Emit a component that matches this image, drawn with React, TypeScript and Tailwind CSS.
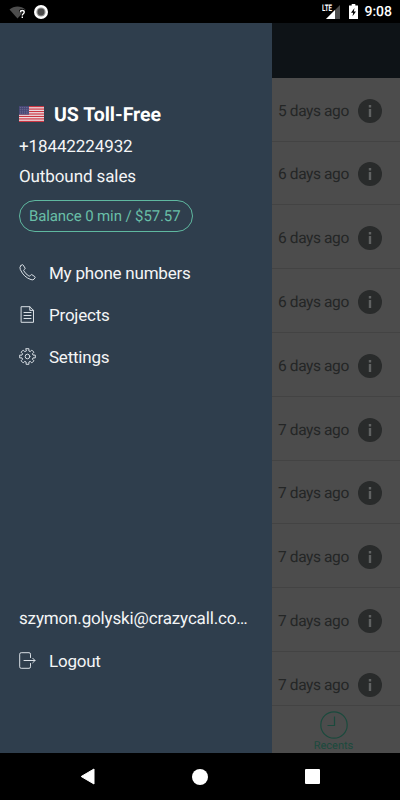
import type { ReactNode } from 'react';

const calls = [
  '5 days ago',
  '6 days ago',
  '6 days ago',
  '6 days ago',
  '6 days ago',
  '7 days ago',
  '7 days ago',
  '7 days ago',
  '7 days ago',
  '7 days ago',
];

const StatusBar = () => (
  <header className="flex h-[23px] shrink-0 items-center justify-between bg-black pl-[9px] pr-[8px] text-white">
    <div className="flex items-center gap-[8px]">
      <svg width="17" height="16" viewBox="0 0 17 16">
        <path d="M0.5 5.5C5 1.5 12 1.5 16.5 5.5L8.5 14.5Z" fill="#4d4d4d" />
        <path
          d="M11.4 8.2C11.4 6 15.2 6 15.2 8.2C15.2 9.7 13.3 9.7 13.3 11.4M13.3 12.5V14"
          fill="none"
          stroke="#000"
          strokeWidth="3"
        />
        <path
          d="M11.4 8.2C11.4 6 15.2 6 15.2 8.2C15.2 9.7 13.3 9.7 13.3 11.4M13.3 12.5V14"
          fill="none"
          stroke="#fff"
          strokeWidth="1.4"
        />
      </svg>
      <svg width="14" height="14" viewBox="0 0 14 14">
        <circle cx="7" cy="7" r="7" fill="#fff" />
        <circle cx="7" cy="7" r="4.6" fill="#999" />
        <circle cx="7" cy="7" r="3.4" fill="#4a4a4a" />
      </svg>
    </div>
    <div className="flex items-center">
      <svg width="19" height="16" viewBox="0 0 19 16">
        <path d="M18 1V15H4Z" fill="#4d4d4d" />
        <path d="M13 6V15H4Z" fill="#fff" />
        <path d="M0 0H10V8H0Z" fill="#000" />
        <text x="0" y="7.3" fill="#fff" fontSize="9" fontWeight="700" textLength="10" lengthAdjust="spacingAndGlyphs">
          LTE
        </text>
      </svg>
      <svg className="ml-[8px]" width="9" height="15" viewBox="0 0 9 15">
        <path d="M0 1.5H2.7V0H6.3V1.5H9V15H0Z" fill="#fff" />
        <path d="M5.5 4L2 8.7H4.2L3.5 12.3L7 7.5H4.8Z" fill="#000" />
      </svg>
      <span className="ml-[6px] pt-px text-[14px] font-medium leading-none">9:08</span>
    </div>
  </header>
);

const Flag = () => (
  <svg width="25" height="16" viewBox="0 0 25 16">
    <rect width="25" height="16" fill="#eee8ec" />
    {[0, 2, 4, 6, 8, 10, 12].map((n) => (
      <rect key={n} y={(n * 16) / 13} width="25" height={16 / 13} fill="#cb3542" />
    ))}
    <rect width="10" height="8.6" fill="#474775" />
    {[1.3, 3.2, 5.1, 7].map((y) =>
      [1.2, 3.2, 5.2, 7.2, 9].map((x) => <circle key={`${x}-${y}`} cx={x} cy={y} r="0.4" fill="#b6b4ca" />),
    )}
  </svg>
);

const Icon = ({ children }: { children: ReactNode }) => (
  <svg
    width="17"
    height="17"
    viewBox="0 0 17 17"
    fill="none"
    stroke="#d9dfe5"
    strokeLinejoin="round"
    strokeLinecap="round"
  >
    {children}
  </svg>
);

const PhoneIcon = () => (
  <Icon>
    <path d="M1.7 1.8L3 .8Q3.7.4 4.2 1.1L6 4Q6.4 4.7 5.7 5.2L4.9 5.8Q4.4 6.2 4.8 6.9Q6.7 10.2 9.9 12Q10.7 12.4 11.1 11.8L11.7 11Q12.2 10.3 12.9 10.7L15.8 12.6Q16.5 13.1 16 13.8L15 15.2Q14.2 16.3 12 15.6Q4.8 13.2 1.3 5.5Q.2 2.9 1.7 1.8Z" />
  </Icon>
);

const DocumentIcon = () => (
  <Icon>
    <path d="M2.5.7H10.8L14.5 4.4V16.3H2.5ZM10.8.7V4.4H14.5M5 6.5H12M5 9.5H12M5 12.5H12" />
  </Icon>
);

const GearIcon = () => (
  <Icon>
    <circle cx="8.5" cy="8.5" r="2.3" />
    <path d="M7.1 .7H9.9V3L11.2 3.6L12.8 2.1L14.9 4.2L13.4 5.8L14 7.1H16.3V9.9H14L13.4 11.2L14.9 12.8L12.8 14.9L11.2 13.4L9.9 14V16.3H7.1V14L5.8 13.4L4.2 14.9L2.1 12.8L3.6 11.2L3 9.9H.7V7.1H3L3.6 5.8L2.1 4.2L4.2 2.1L5.8 3.6L7.1 3Z" />
  </Icon>
);

const LogoutIcon = () => (
  <Icon>
    <path d="M11.5 5.5V2.2Q11.5.7 10 .7H2.2Q.7.7.7 2.2V14.8Q.7 16.3 2.2 16.3H10Q11.5 16.3 11.5 14.8V11.5M5 8.5H16M13.7 6.2L16 8.5L13.7 10.8" />
  </Icon>
);

const MenuItem = ({ icon, label }: { icon: ReactNode; label: string }) => (
  <button className="flex h-[42px] items-center gap-[13px] text-left tracking-[-0.22px]" type="button">
    {icon}
    <span className="pt-[3px]">{label}</span>
  </button>
);

const Drawer = () => (
  <aside className="flex w-[272px] shrink-0 flex-col bg-[#2f3e4d] pl-[19px] pr-[20px] text-[17px] text-[#f4f5f6]">
    <div className="mt-[76px] flex h-[30px] items-center gap-[10px]">
      <Flag />
      <h1 className="pt-px text-[19.5px] font-bold text-white">US Toll-Free</h1>
    </div>
    <p className="mt-[3px] leading-[30px] tracking-[-0.1px]">+18442224932</p>
    <p className="leading-[30px] tracking-[-0.1px]">Outbound sales</p>
    <div className="mt-[8px] flex h-[32px] w-[174px] items-center rounded-full border border-[#5fb8a0] pl-[9px] text-[15px] tracking-[-0.12px] text-[#69bea7]">
      Balance 0 min / $57.57
    </div>
    <nav className="mt-[19px] flex flex-col">
      <MenuItem icon={<PhoneIcon />} label="My phone numbers" />
      <MenuItem icon={<DocumentIcon />} label="Projects" />
      <MenuItem icon={<GearIcon />} label="Settings" />
    </nav>
    <div className="mb-[72px] mt-auto flex flex-col">
      <p className="h-[42px] pt-px leading-[42px] tracking-[-0.15px]">szymon.golyski@crazycall.co…</p>
      <MenuItem icon={<LogoutIcon />} label="Logout" />
    </div>
  </aside>
);

const InfoIcon = () => (
  <svg width="24" height="24" viewBox="0 0 24 24">
    <circle cx="12" cy="12" r="12" fill="#292b2b" />
    <path d="M10.8 6H13.2V8.4H10.8ZM10.8 10H13.2V18H10.8Z" fill="#606262" />
  </svg>
);

const Recents = () => (
  <main className="flex min-w-0 flex-1 flex-col bg-[#4c4c4c]">
    <div className="h-[54.8px] shrink-0 bg-[#0e1317]" />
    <ul className="min-h-0 flex-1 overflow-hidden">
      {calls.map((time, index) => (
        <li
          key={index}
          className="flex h-[63.8px] items-center justify-between border-b border-[#434343] pl-[6px] pr-[18px] pt-[3px] text-[15.5px] tracking-[-0.39px] text-[#242626]"
        >
          <span className="pt-px">{time}</span>
          <InfoIcon />
        </li>
      ))}
    </ul>
    <footer className="flex h-[48px] shrink-0 flex-col items-center border-t border-[#434343] pr-[5px] pt-[5px] text-[#1b4a3d]">
      <svg className="shrink-0" width="28" height="28" viewBox="0 0 28 28" fill="none" stroke="currentColor">
        <circle cx="14" cy="14" r="13.2" strokeWidth="1.2" />
        <path d="M14.5 5.5V14.5H7.5" strokeWidth="1.2" />
      </svg>
      <span className="text-[11px] leading-[13px]">Recents</span>
    </footer>
  </main>
);

const NavigationBar = () => (
  <footer className="flex h-[47px] shrink-0 items-center justify-between bg-black pl-[80px] pr-[80px]">
    <svg width="15" height="17" viewBox="0 0 15 17">
      <path d="M1.2 8.5L14 1V16Z" fill="#fff" stroke="#fff" strokeLinejoin="round" />
    </svg>
    <div className="h-[16px] w-[16px] rounded-full bg-white" />
    <div className="h-[15px] w-[15px] rounded-[1px] bg-white" />
  </footer>
);

const App = () => (
  <div className="flex h-[800px] w-[400px] flex-col overflow-hidden bg-black font-['Roboto',sans-serif] [text-rendering:geometricPrecision]">
    <StatusBar />
    <div className="flex min-h-0 flex-1">
      <Drawer />
      <Recents />
    </div>
    <NavigationBar />
  </div>
);

export default App;
